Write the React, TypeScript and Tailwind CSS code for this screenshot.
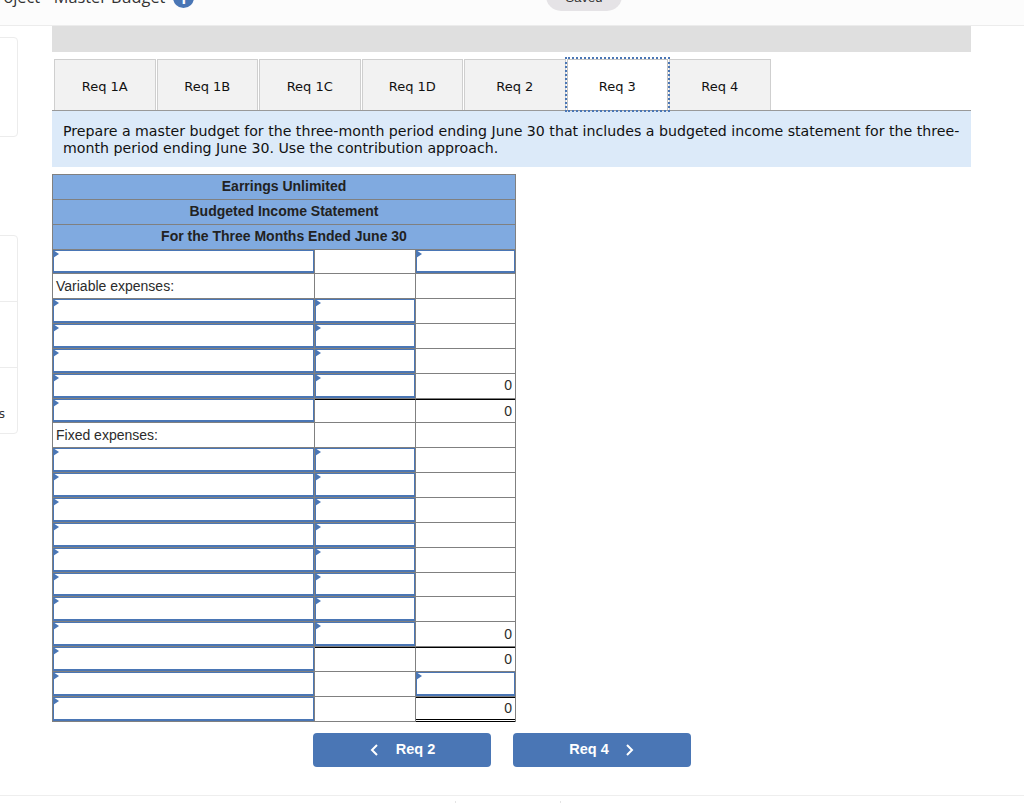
const tabs = ["Req 1A", "Req 1B", "Req 1C", "Req 1D", "Req 2", "Req 3", "Req 4"];

type CellKind = "input" | "blank" | "text";
type Row = {
  a: CellKind;
  label?: string;
  b: CellKind;
  c: CellKind;
  value?: string;
  bTop?: boolean;
  cTop?: boolean;
  cDouble?: boolean;
};

const rows: Row[] = [
  { a: "input", b: "blank", c: "input" },
  { a: "text", label: "Variable expenses:", b: "blank", c: "blank" },
  { a: "input", b: "input", c: "blank" },
  { a: "input", b: "input", c: "blank" },
  { a: "input", b: "input", c: "blank" },
  { a: "input", b: "input", c: "text", value: "0" },
  { a: "input", b: "blank", c: "text", value: "0", bTop: true, cTop: true },
  { a: "text", label: "Fixed expenses:", b: "blank", c: "blank" },
  { a: "input", b: "input", c: "blank" },
  { a: "input", b: "input", c: "blank" },
  { a: "input", b: "input", c: "blank" },
  { a: "input", b: "input", c: "blank" },
  { a: "input", b: "input", c: "blank" },
  { a: "input", b: "input", c: "blank" },
  { a: "input", b: "input", c: "blank" },
  { a: "input", b: "input", c: "text", value: "0" },
  { a: "input", b: "blank", c: "text", value: "0", bTop: true, cTop: true },
  { a: "input", b: "blank", c: "input" },
  { a: "input", b: "blank", c: "text", value: "0", cTop: true, cDouble: true },
];

function InputCell() {
  return (
    <div className="relative h-full w-full border border-b-2 border-[#4a76b5] bg-white">
      <span className="absolute -left-px -top-px h-0 w-0 border-y-[4px] border-l-[6px] border-y-transparent border-l-[#4a76b5]" />
    </div>
  );
}

function Cell({ kind, text, className }: { kind: CellKind; text?: string; className: string }) {
  return (
    <div className={`h-full border-b border-r border-[#808080] ${className}`}>
      {kind === "input" && <InputCell />}
      {kind === "text" && (
        <div className="flex h-full items-center px-[3px] text-[14px] text-[#2b2b2b]">{text}</div>
      )}
    </div>
  );
}

function HeaderRow({ children }: { children: string }) {
  return (
    <div className="flex h-[24.85px] items-center justify-center border-b border-[#808080] bg-[#80aae0] text-[14px] font-bold text-[#222]">
      {children}
    </div>
  );
}

export default function App() {
  return (
    <div className="h-[803px] w-[1024px] overflow-hidden bg-white font-['Liberation_Sans',Arial,sans-serif]">
      <header className="flex h-[26px] items-end overflow-hidden border-b border-[#ececec] bg-[#fcfcfc]">
        <div className="mb-[18px] ml-[-13px] flex w-[559px] shrink-0 items-end font-['Open_Sans',sans-serif] text-[16.3px] leading-[20px] text-[#333]">
          <span className="whitespace-nowrap">Project - Master Budget</span>
          <span className="mb-[-1px] ml-[8px] flex h-[21px] w-[21px] items-center justify-center rounded-full bg-[#4a76b5] text-[15px] font-bold text-white">
            i
          </span>
        </div>
        <div className="mb-[14px] flex h-[30px] w-[76px] items-center justify-center rounded-full bg-[#e5e3e6] pt-[3px] text-[13px] text-[#333]">
          Saved
        </div>
      </header>

      <div className="flex">
        <aside className="w-[52px] shrink-0">
          <div className="ml-[-20px] mt-[11px] h-[100px] w-[38px] rounded border border-[#ececec]" />
          <div className="ml-[-20px] mt-[98px] flex w-[38px] flex-col rounded border border-[#ececec]">
            <div className="h-[66px] border-b border-[#ececec]" />
            <div className="h-[66px] border-b border-[#ececec]" />
            <div className="flex h-[65px] items-center justify-end pr-[12px] pt-[26px] font-['DejaVu_Sans',sans-serif] text-[12px] text-[#333]">
              s
            </div>
          </div>
        </aside>

        <main className="w-[919px]">
          <div className="h-[26px] bg-[#dfdfdf]" />
          <nav className="mt-[7px] flex h-[52px] items-end border-b border-[#999] pl-[2px] font-['DejaVu_Sans',Verdana,sans-serif] text-[13px] text-[#111]">
            {tabs.map((tab) => (
              <div
                key={tab}
                className={
                  tab === "Req 3"
                    ? "relative mr-px flex h-[51px] w-[101.5px] items-center justify-center border-x border-t border-[#c4c4c4] bg-white pt-[3px] outline-2 outline-dotted outline-[#4a76b5]"
                    : "mr-px flex h-[51px] w-[101.5px] items-center justify-center border-x border-t border-[#cfcfcf] bg-[#f2f2f2] pt-[3px]"
                }
              >
                {tab}
              </div>
            ))}
          </nav>
          <p className="h-[56px] bg-[#dceaf9] px-[11px] pt-[12px] font-['DejaVu_Sans',Verdana,sans-serif] text-[14.16px] leading-[17px] text-[#111]">
            Prepare a master budget for the three-month period ending June 30 that includes a budgeted income statement for the three-month period ending June 30. Use the contribution approach.
          </p>

          <div className="mt-[7px] w-[464px] border-l border-r border-t border-[#808080]">
            <HeaderRow>Earrings Unlimited</HeaderRow>
            <HeaderRow>Budgeted Income Statement</HeaderRow>
            <HeaderRow>For the Three Months Ended June 30</HeaderRow>
            {rows.map((row, i) => (
              <div key={i} className="grid h-[24.85px] grid-cols-[262px_101px_1fr]">
                <Cell kind={row.a} text={row.label} className="" />
                <Cell kind={row.b} className={row.bTop ? "border-t border-t-black" : ""} />
                <div
                  className={`h-full ${row.cDouble ? "border-b-[3px] border-double border-b-black" : "border-b border-[#808080]"} ${row.cTop ? "border-t border-t-black" : ""}`}
                >
                  {row.c === "input" && <InputCell />}
                  {row.c === "text" && (
                    <div className="flex h-full items-center justify-end px-[3px] text-[14px] text-[#2b2b2b]">
                      {row.value}
                    </div>
                  )}
                </div>
              </div>
            ))}
          </div>

          <div className="mt-[11px] flex gap-[22px] pl-[261px] text-[14.5px] font-bold text-white">
            <button className="flex h-[34px] w-[178px] items-center justify-center gap-[17px] rounded-sm bg-[#4a76b5] pt-px">
              <svg width="10" height="14" viewBox="0 0 10 14" fill="none" stroke="currentColor" strokeWidth="2">
                <path d="M8 2 3 7l5 5" />
              </svg>
              Req 2
            </button>
            <button className="flex h-[34px] w-[178px] items-center justify-center gap-[16px] rounded-sm bg-[#4a76b5] pt-px">
              Req 4
              <svg width="10" height="14" viewBox="0 0 10 14" fill="none" stroke="currentColor" strokeWidth="2">
                <path d="m2 2 5 5-5 5" />
              </svg>
            </button>
          </div>
        </main>
      </div>
      <div className="mt-[28px] border-t border-[#eeeeee]" />
      <div className="mt-[5px] flex gap-[104px] pl-[455px]">
        <span className="h-[2px] w-px bg-[#e4e4e4]" />
        <span className="h-[2px] w-px bg-[#e4e4e4]" />
      </div>
    </div>
  );
}
